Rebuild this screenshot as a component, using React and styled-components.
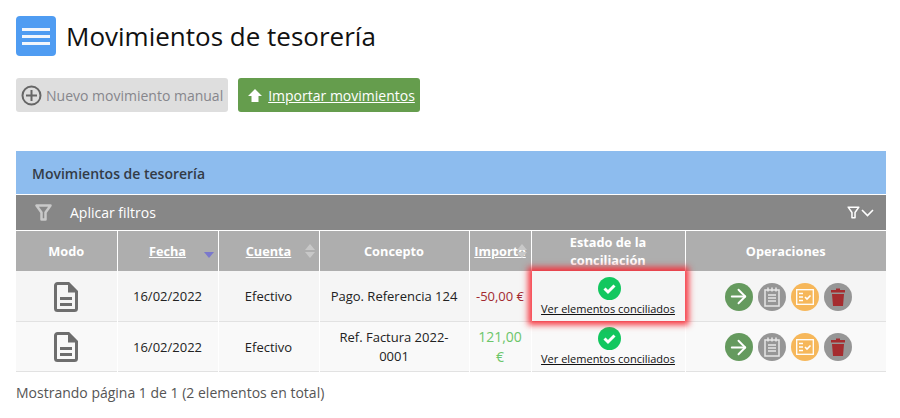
import React from "react";
import styled, { createGlobalStyle } from "styled-components";
import { ArrowRight } from "lucide-react";

const GlobalStyle = createGlobalStyle`
  html, body {
    margin: 0;
    padding: 0;
    background: #fff;
    font-family: "Open Sans", "Liberation Sans", sans-serif;
  }
`;

const Page = styled.div`
  width: 900px;
  height: 418px;
  padding: 16px 14px 0 16px;
  box-sizing: border-box;
  overflow: hidden;
`;

const TitleRow = styled.div`
  display: flex;
  align-items: center;
  gap: 10px;
  height: 40px;
`;

const MenuIcon = styled.div`
  width: 40px;
  height: 40px;
  border-radius: 4px;
  background: #4f9cf2;
  display: flex;
  flex-direction: column;
  align-items: center;
  justify-content: center;
  gap: 4px;
`;

const MenuLine = styled.span`
  width: 28px;
  height: 3px;
  background: #f2f6fc;
`;

const Title = styled.h1`
  margin: 0;
  font-size: 26px;
  font-weight: 400;
  color: #111;
  line-height: 40px;
`;

const Actions = styled.div`
  display: flex;
  gap: 10px;
  margin-top: 22px;
`;

const ActionButton = styled.a`
  height: 34px;
  border-radius: 3px;
  display: flex;
  align-items: center;
  box-sizing: border-box;
  font-size: 14px;
  background: ${(p) => (p.$disabled ? "#dedede" : "#659d4d")};
  color: ${(p) => (p.$disabled ? "#86868c" : "#fff")};
  padding: ${(p) => (p.$disabled ? "0 5px 0 5px" : "0 5px 0 10px")};
  gap: ${(p) => (p.$disabled ? "4px" : "6px")};
  text-decoration: none;
`;

const Underlined = styled.span`
  text-decoration: underline;
`;

const Panel = styled.div`
  margin-top: 39px;
  width: 870px;
`;

const PanelTitle = styled.div`
  height: 43px;
  background: #8dbcee;
  color: #333b46;
  font-size: 14px;
  font-weight: 600;
  display: flex;
  align-items: center;
  padding-left: 16px;
  padding-top: 2px;
  box-sizing: border-box;
`;

const FilterBar = styled.div`
  height: 35px;
  margin-top: 1px;
  background: #878787;
  color: #fff;
  font-size: 14px;
  font-weight: 400;
  display: flex;
  align-items: center;
  padding: 0 12px 0 19px;
  gap: 18px;
`;

const FilterLabel = styled.span`
  flex: 1;
`;

const FilterToggle = styled.span`
  display: flex;
  align-items: center;
  gap: 1px;
`;

const Table = styled.table`
  width: 870px;
  table-layout: fixed;
  border-collapse: collapse;
  margin-top: 1px;
`;

const HeadCell = styled.th`
  position: relative;
  height: 40px;
  padding: 0 2px;
  background: #aeaeae;
  color: #fff;
  font-size: 12.75px;
  font-weight: 700;
  line-height: 18px;
  text-align: center;
  border-left: 1px solid #fff;
  &:first-child { border-left: 0; }
`;

const SortLink = styled.span`
  text-decoration: underline;
`;

const SortMark = styled.span`
  position: absolute;
  display: flex;
  flex-direction: column;
  gap: 2px;
  top: ${(p) => p.$top}px;
  right: ${(p) => p.$right}px;
`;

const ArrowUp = styled.i`
  display: block;
  border-left: 5px solid transparent;
  border-right: 5px solid transparent;
  border-bottom: 6px solid #c8c8c8;
`;

const ArrowDown = styled.i`
  display: block;
  border-left: 5px solid transparent;
  border-right: 5px solid transparent;
  border-top: 6px solid ${(p) => p.$color || "#c8c8c8"};
`;

const Row = styled.tr`
  background: ${(p) => (p.$odd ? "#f5f5f5" : "#f9f9f9")};
  border-bottom: 1px solid #e2e2e2;
`;

const Cell = styled.td`
  height: 50px;
  padding: 2px 8px 0;
  box-sizing: border-box;
  text-align: center;
  font-size: 13px;
  line-height: 19px;
  color: #222;
  border-left: 1px solid #fff;
  &:first-child { border-left: 0; }
`;

const AmountCell = styled(Cell)`
  padding: 2px 5px 0;
`;

const StatusCell = styled(Cell)`
  position: relative;
  padding: 0 2px;
  z-index: ${(p) => (p.$highlight ? 2 : "auto")};
`;

const HighlightFrame = styled.span`
  position: absolute;
  inset: 0;
  pointer-events: none;
  box-shadow: 0 0 6px 4px rgba(245, 45, 55, 0.92);
`;

const Amount = styled.span`
  font-size: ${(p) => (p.$negative ? "13px" : "14px")};
  color: ${(p) => (p.$negative ? "#a32a30" : "#6cc66a")};
`;

const StatusStack = styled.div`
  display: flex;
  flex-direction: column;
  align-items: center;
  gap: 2px;
  svg {
    margin-left: 2px;
  }
`;

const StatusLink = styled.a`
  font-size: 11px;
  line-height: 13px;
  color: #111;
  text-decoration: underline;
`;

const OpsRow = styled.div`
  display: flex;
  justify-content: center;
  gap: 5px;
  padding-left: 5px;
`;

const OpButton = styled.span`
  width: 28px;
  height: 28px;
  border-radius: 50%;
  background: ${(p) => p.$bg};
  display: flex;
  align-items: center;
  justify-content: center;
`;

const Footer = styled.div`
  margin-top: 11px;
  font-size: 14px;
  color: #555;
`;

const DocIcon = () => (
  <svg width="24" height="30" viewBox="0 0 24 30" style={{ display: "block", margin: "0 auto" }}>
    <path
      d="M3.500 1.500h11l8 8v17a2 2 0 0 1-2 2h-17a2 2 0 0 1-2-2v-23a2 2 0 0 1 2-2z"
      fill="none"
      stroke="#6e6e6e"
      strokeWidth="3"
    />
    <path d="M14 1.500v9h9z" fill="#6e6e6e" />
    <path d="M6 16.500h12M6 22.500h12" stroke="#6e6e6e" strokeWidth="3" />
  </svg>
);

const PlusIcon = () => (
  <svg width="21" height="21" viewBox="0 0 21 21">
    <circle cx="10.500" cy="10.500" r="9" fill="none" stroke="#666" strokeWidth="2" />
    <path d="M10.500 5v11M5 10.500h11" stroke="#666" strokeWidth="2" />
  </svg>
);

const UploadIcon = () => (
  <svg width="14" height="13" viewBox="0 0 14 13">
    <path d="M7 0l7 7h-3.500v6h-7V7H0z" fill="#fff" />
  </svg>
);

const FunnelIcon = ({ size = 17, color = "#c9c9c9", width = 2.500 }) => (
  <svg width={size} height={size} viewBox="0 0 17 17">
    <path
      d="M1.500 1.500h14l-5 7v7h-4v-7z"
      fill="none"
      stroke={color}
      strokeWidth={width}
      strokeLinejoin="round"
    />
  </svg>
);

const ChevronIcon = () => (
  <svg width="13" height="8" viewBox="0 0 13 8">
    <path d="M1 1l5.500 5.500L12 1" fill="none" stroke="#fff" strokeWidth="1.600" />
  </svg>
);

const CheckIcon = () => (
  <svg width="23" height="23" viewBox="0 0 23 23">
    <circle cx="11.500" cy="11.500" r="11.500" fill="#12c75f" />
    <path d="M6.500 11.500l3.500 3.500 6.500-6.500" fill="none" stroke="#fff" strokeWidth="3" />
  </svg>
);

const NotepadIcon = () => (
  <svg width="18" height="20" viewBox="0 0 18 20">
    <rect x="2" y="3" width="14" height="16" fill="none" stroke="#e6e6e6" strokeWidth="1.500" />
    <path d="M5 0.500v4M9 0.500v4M13 0.500v4" stroke="#e6e6e6" strokeWidth="1.500" />
    <path d="M5 8h8M5 11h8M5 14h8" stroke="#e6e6e6" strokeWidth="1.400" />
  </svg>
);

const ChecklistIcon = () => (
  <svg width="18" height="16" viewBox="0 0 18 16">
    <rect x="0.700" y="0.700" width="16.600" height="14.600" fill="none" stroke="#fff" strokeWidth="1.300" />
    <path d="M3 4.500h4M3 8h4M3 11.500h4" stroke="#fff" strokeWidth="1.300" />
    <path d="M9 8l2 2 3.500-3.500" fill="none" stroke="#fff" strokeWidth="1.600" />
  </svg>
);

const TrashIcon = () => (
  <svg width="16" height="18" viewBox="0 0 16 18">
    <path d="M6 0.500h4v1.500h5v2.500H1V2h5z" fill="#a52c2f" />
    <path d="M2 6h12l-1 12H3z" fill="#a52c2f" />
  </svg>
);

const rows = [
  { concept: "Pago. Referencia 124", amount: "-50,00 €", negative: true, highlight: true },
  { concept: "Ref. Factura 2022-0001", amount: "121,00 €", negative: false, highlight: false },
];

const widths = [101, 101, 101, 150, 62, 154, 201];

export default function App() {
  return (
    <Page>
      <GlobalStyle />
      <TitleRow>
        <MenuIcon>
          <MenuLine />
          <MenuLine />
          <MenuLine />
        </MenuIcon>
        <Title>Movimientos de tesorería</Title>
      </TitleRow>
      <Actions>
        <ActionButton $disabled>
          <PlusIcon />
          Nuevo movimiento manual
        </ActionButton>
        <ActionButton>
          <UploadIcon />
          <Underlined>Importar movimientos</Underlined>
        </ActionButton>
      </Actions>
      <Panel>
        <PanelTitle>Movimientos de tesorería</PanelTitle>
        <FilterBar>
          <FunnelIcon />
          <FilterLabel>Aplicar filtros</FilterLabel>
          <FilterToggle>
            <FunnelIcon size={13} color="#fff" width={2} />
            <ChevronIcon />
          </FilterToggle>
        </FilterBar>
        <Table>
          <colgroup>
            {widths.map((w, i) => (
              <col key={i} style={{ width: w }} />
            ))}
          </colgroup>
          <thead>
            <tr>
              <HeadCell>Modo</HeadCell>
              <HeadCell>
                <SortLink>Fecha</SortLink>
                <SortMark $top={21} $right={4}>
                  <ArrowDown $color="#7a78cc" />
                </SortMark>
              </HeadCell>
              <HeadCell>
                <SortLink>Cuenta</SortLink>
                <SortMark $top={13} $right={4}>
                  <ArrowUp />
                  <ArrowDown />
                </SortMark>
              </HeadCell>
              <HeadCell>Concepto</HeadCell>
              <HeadCell>
                <SortLink>Importe</SortLink>
                <SortMark $top={13} $right={4}>
                  <ArrowUp />
                  <ArrowDown />
                </SortMark>
              </HeadCell>
              <HeadCell>Estado de la conciliación</HeadCell>
              <HeadCell>Operaciones</HeadCell>
            </tr>
          </thead>
          <tbody>
            {rows.map((r, i) => (
              <Row key={i} $odd={i === 0}>
                <Cell>
                  <DocIcon />
                </Cell>
                <Cell>16/02/2022</Cell>
                <Cell>Efectivo</Cell>
                <Cell>{r.concept}</Cell>
                <AmountCell>
                  <Amount $negative={r.negative}>{r.amount}</Amount>
                </AmountCell>
                <StatusCell $highlight={r.highlight}>
                  {r.highlight && <HighlightFrame />}
                  <StatusStack>
                    <CheckIcon />
                    <StatusLink>Ver elementos conciliados</StatusLink>
                  </StatusStack>
                </StatusCell>
                <Cell>
                  <OpsRow>
                    <OpButton $bg="#659a5e">
                      <ArrowRight size={23} color="#fff" strokeWidth={2} />
                    </OpButton>
                    <OpButton $bg="#969696">
                      <NotepadIcon />
                    </OpButton>
                    <OpButton $bg="#f6b75a">
                      <ChecklistIcon />
                    </OpButton>
                    <OpButton $bg="#969696">
                      <TrashIcon />
                    </OpButton>
                  </OpsRow>
                </Cell>
              </Row>
            ))}
          </tbody>
        </Table>
        <Footer>Mostrando página 1 de 1 (2 elementos en total)</Footer>
      </Panel>
    </Page>
  );
}
